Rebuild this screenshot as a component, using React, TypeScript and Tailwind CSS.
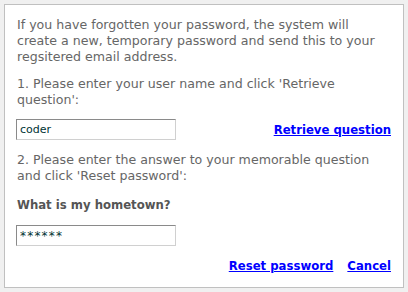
export default function App() {
  return (
    <div className="h-[292px] w-[408px] bg-[#f0f0f0] p-[4px] font-['DejaVu_Sans',Verdana,sans-serif] text-[12.6px] leading-[16px] text-[#666666]">
      <div className="h-[284px] border border-[#c0c0c0] bg-white px-[12px] pt-[12px]">
        <p>
          If you have forgotten your password, the system will create a new, temporary password and send this to your
          regsitered email address.
        </p>
        <p className="mt-[11px]">1. Please enter your user name and click 'Retrieve question':</p>
        <div className="mt-[11px] flex items-center justify-between">
          <input
            defaultValue="coder"
            className="ml-[-1px] h-[21px] w-[160px] border border-t-[#8a8a8a] border-l-[#8a8a8a] border-r-[#d0d0d0] border-b-[#d0d0d0] px-[3px] text-[11px] text-[#003333] outline-none"
          />
          <a href="#" className="text-[11.7px] font-bold text-[#0000ff] underline">
            Retrieve question
          </a>
        </div>
        <p className="mt-[12px]">
          2. Please enter the answer to your memorable question and click 'Reset password':
        </p>
        <p className="mt-[13px] text-[11.7px] font-bold text-[#555555]">What is my hometown?</p>
        <div className="mt-[12px]">
          <input
            defaultValue="******"
            className="ml-[-1px] h-[21px] w-[160px] border border-t-[#8a8a8a] border-l-[#8a8a8a] border-r-[#d0d0d0] border-b-[#d0d0d0] px-[3px] text-[12px] tracking-[1.2px] text-[#003333] outline-none"
          />
        </div>
        <div className="mt-[12px] flex justify-end gap-[14px]">
          <a href="#" className="text-[11.7px] font-bold text-[#0000ff] underline">
            Reset password
          </a>
          <a href="#" className="text-[11.7px] font-bold text-[#0000ff] underline">
            Cancel
          </a>
        </div>
      </div>
    </div>
  );
}
